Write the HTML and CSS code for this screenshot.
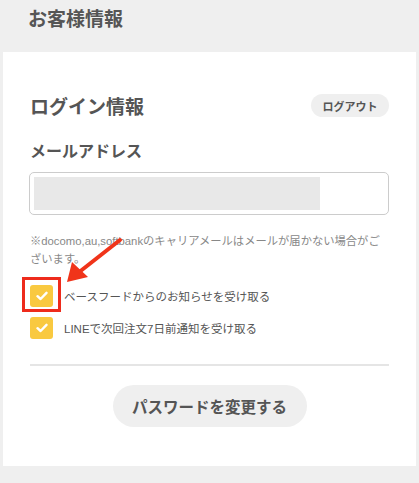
FILE: index.html
```html
<!DOCTYPE html>
<html lang="ja">
<head>
<meta charset="utf-8">
<title>お客様情報</title>
<link rel="stylesheet" href="styles.css">
</head>
<body>
<header class="page-head">
  <h1 class="page-title">お客様情報</h1>
</header>
<main class="card">
  <div class="card-row">
    <h2 class="section-title">ログイン情報</h2>
    <button class="pill">ログアウト</button>
  </div>
  <div class="field-label">メールアドレス</div>
  <div class="input-box"><div class="input-mask"></div></div>
  <p class="note">※docomo,au,softbankのキャリアメールはメールが届かない場合がございます。</p>
  <div class="checks">
    <svg class="arrow" width="70" height="60" viewBox="0 0 70 60">
      <line x1="62" y1="4" x2="20" y2="37" stroke="#f0341a" stroke-width="4" stroke-linecap="round"/>
      <polygon points="9,46 14,26 30,41" fill="#f0341a"/>
    </svg>
    <label class="check">
      <span class="box"><svg width="12" height="10" viewBox="0 0 12 10"><path d="M1.5 5.2 L4.6 8 L10.5 1.8" fill="none" stroke="#fff" stroke-width="2.4" stroke-linecap="round" stroke-linejoin="round"/></svg></span>
      <span class="check-text">ベースフードからのお知らせを受け取る</span>
      <span class="highlight"></span>
    </label>
    <label class="check">
      <span class="box"><svg width="12" height="10" viewBox="0 0 12 10"><path d="M1.5 5.2 L4.6 8 L10.5 1.8" fill="none" stroke="#fff" stroke-width="2.4" stroke-linecap="round" stroke-linejoin="round"/></svg></span>
      <span class="check-text">LINEで次回注文7日前通知を受け取る</span>
    </label>
  </div>
  <hr class="divider">
  <div class="btn-wrap"><button class="btn">パスワードを変更する</button></div>
</main>
</body>
</html>
```
FILE: styles.css
```css
* { box-sizing: border-box; }
html, body { margin: 0; padding: 0; }
body {
  background: #efefef;
  font-family: "Noto Sans CJK JP", "Noto Sans", "Liberation Sans", sans-serif;
  color: #555;
}
.page-head {
  height: 52px;
  padding-left: 28px;
}
.page-title {
  margin: 0;
  font-size: 19px;
  line-height: 36px;
  font-weight: 700;
  color: #555;
}
.card {
  background: #fff;
  margin: 0 3px;
  padding: 42px 27px 39px 27px;
  height: 414px;
}
.card-row {
  display: flex;
  justify-content: space-between;
  align-items: center;
  height: 23px;
}
.section-title {
  margin: 0;
  font-size: 19px;
  line-height: 23px;
  font-weight: 700;
  color: #555;
}
.pill {
  border: 0;
  background: #efefef;
  border-radius: 12px;
  width: 78px;
  height: 23px;
  font-family: inherit;
  font-size: 11px;
  font-weight: 700;
  color: #555;
  padding: 0;
  margin: 0;
}
.field-label {
  margin-top: 23px;
  font-size: 16px;
  line-height: 20px;
  font-weight: 700;
}
.input-box {
  margin-top: 12px;
  margin-left: -1px;
  height: 43px;
  border: 1px solid #ccc;
  border-radius: 5px;
  padding: 4px;
}
.input-mask {
  width: 286px;
  height: 33px;
  background: #e8e8e8;
}
.note {
  margin: 18px 0 0;
  font-family: "Liberation Sans", "Noto Sans CJK JP", sans-serif;
  font-size: 11.3px;
  line-height: 17.5px;
  color: #888;
}
.checks {
  position: relative;
  margin-top: 17px;
  display: flex;
  flex-direction: column;
  gap: 10px;
}
.check {
  position: relative;
  display: flex;
  align-items: center;
  gap: 11px;
  height: 22px;
}
.box {
  width: 23px;
  height: 22px;
  border-radius: 3px;
  background: #f9c940;
  display: flex;
  align-items: center;
  justify-content: center;
}
.check-text {
  font-family: "Liberation Sans", "Noto Sans CJK JP", sans-serif;
  font-size: 11.5px;
  color: #555;
}
.highlight {
  position: absolute;
  left: -8px;
  top: -8px;
  width: 39px;
  height: 35px;
  border: 3.5px solid #ee2b1c;
}
.arrow {
  position: absolute;
  left: 28px;
  top: -49px;
}
.divider {
  margin: 25px 0 0;
  border: 0;
  height: 2px;
  background: #e5e5e5;
}
.btn-wrap {
  display: flex;
  justify-content: center;
  margin-top: 19px;
}
.btn {
  border: 0;
  background: #efefef;
  border-radius: 21px;
  width: 194px;
  height: 42px;
  font-family: inherit;
  font-size: 15.5px;
  font-weight: 700;
  color: #555;
  padding: 0;
}
```
